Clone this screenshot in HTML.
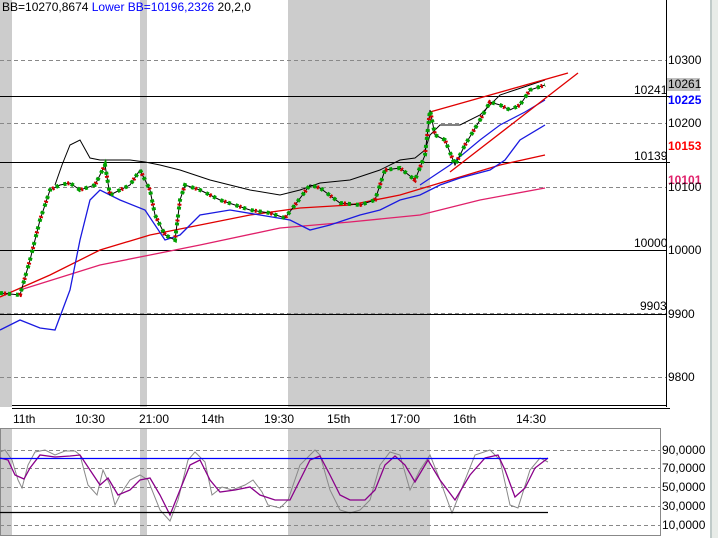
<!DOCTYPE html><html><head><style>
body{margin:0;background:#fff;width:718px;height:538px;overflow:hidden;font-family:"Liberation Sans",sans-serif;}
svg{position:absolute;left:0;top:0}
text{font-family:"Liberation Sans",sans-serif;font-size:12px}
</style></head><body>
<svg width="718" height="538" viewBox="0 0 718 538">
<rect width="718" height="538" fill="#fff"/>
<rect x="0" y="0" width="12" height="407" fill="#cccccc"/>
<rect x="140" y="0" width="7" height="407" fill="#cccccc"/>
<rect x="288" y="0" width="142" height="407" fill="#cccccc"/>
<rect x="0" y="429" width="12" height="106" fill="#cccccc"/>
<rect x="140" y="429" width="7" height="106" fill="#cccccc"/>
<rect x="288" y="429" width="142" height="106" fill="#cccccc"/>
<rect x="710" y="0" width="8" height="538" fill="#e8ece8"/>
<line x1="711" y1="0" x2="711" y2="538" stroke="#9aa" />
<g stroke="#888" stroke-dasharray="4,3" stroke-width="1">
<line x1="0" y1="60.5" x2="666" y2="60.5"/><line x1="0" y1="123.5" x2="666" y2="123.5"/>
<line x1="0" y1="187.5" x2="666" y2="187.5"/><line x1="0" y1="250.5" x2="666" y2="250.5"/>
<line x1="0" y1="313.5" x2="666" y2="313.5"/><line x1="0" y1="377.5" x2="666" y2="377.5"/>
<line x1="0" y1="450.5" x2="660" y2="450.5"/><line x1="0" y1="468.5" x2="660" y2="468.5"/>
<line x1="0" y1="487.5" x2="660" y2="487.5"/><line x1="0" y1="506.5" x2="660" y2="506.5"/>
<line x1="0" y1="525.5" x2="660" y2="525.5"/>
</g>
<g stroke="#000" stroke-width="1">
<line x1="0" y1="96.5" x2="670" y2="96.5"/><line x1="0" y1="162.5" x2="670" y2="162.5"/>
<line x1="0" y1="250.5" x2="666" y2="250.5"/><line x1="0" y1="314.5" x2="666" y2="314.5"/>
<line x1="666.5" y1="0" x2="666.5" y2="407"/>
<line x1="12" y1="405.5" x2="666" y2="405.5"/><line x1="12" y1="408.5" x2="670" y2="408.5"/>
</g>
<rect x="0.5" y="428.5" width="660" height="107" fill="none" stroke="#888"/>
<polyline fill="none" stroke="#e0206a" stroke-width="1.3" points="20,290 100,265 150,255 200,245 280,228 350,222 420,215 480,200 545,188"/>
<polyline fill="none" stroke="#e00000" stroke-width="1.3" points="0,297 50,275 100,250 150,235 200,225 250,215 300,208 350,205 400,195 450,180 500,165 545,155"/>
<polyline fill="none" stroke="#1a1ae0" stroke-width="1.3" points="0,330 20,320 40,328 55,330 70,290 80,240 90,200 100,190 120,200 145,210 165,240 180,235 200,215 230,210 260,215 290,220 310,230 330,225 360,215 380,210 400,200 420,195 440,185 460,178 490,170 505,160 520,140 545,125"/>
<polyline fill="none" stroke="#000" stroke-width="1" points="55,185 62,165 70,145 80,140 90,158 100,160 110,160 130,160 145,162 160,165 180,170 210,180 250,190 280,195 300,190 320,183 350,180 380,170 400,160 415,158 425,150 430,135 440,125 460,125 480,115 500,95 530,85 545,80"/>
<polyline fill="none" stroke="#1a1ae0" stroke-width="1.2" points="420,185 450,165 480,140 500,125 525,112 545,100"/>
<line x1="430" y1="112" x2="568" y2="73" stroke="#e00000" stroke-width="1.3"/>
<line x1="450" y1="172" x2="578" y2="73" stroke="#e00000" stroke-width="1.3"/>
<polyline fill="none" stroke="#000" stroke-width="1" points="0,293 20,295 30,260 40,220 50,190 60,185 70,183 80,190 95,185 105,165 110,195 120,190 130,185 140,170 150,190 155,215 165,235 175,240 180,200 185,185 200,190 210,195 220,200 235,205 250,210 270,213 285,218 295,205 310,185 320,188 340,203 360,205 375,200 385,170 400,168 415,180 425,155 430,110 435,135 445,140 455,165 465,145 480,120 490,102 500,105 510,110 520,105 530,90 545,85"/>
<polyline fill="none" stroke="#00a000" stroke-width="4" stroke-dasharray="3,5" points="0,293 20,295 30,260 40,220 50,190 60,185 70,183 80,190 95,185 105,165 110,195 120,190 130,185 140,170 150,190 155,215 165,235 175,240 180,200 185,185 200,190 210,195 220,200 235,205 250,210 270,213 285,218 295,205 310,185 320,188 340,203 360,205 375,200 385,170 400,168 415,180 425,155 430,110 435,135 445,140 455,165 465,145 480,120 490,102 500,105 510,110 520,105 530,90 545,85"/>
<polyline fill="none" stroke="#d00000" stroke-width="4" stroke-dasharray="2,14" stroke-dashoffset="-4" points="0,293 20,295 30,260 40,220 50,190 60,185 70,183 80,190 95,185 105,165 110,195 120,190 130,185 140,170 150,190 155,215 165,235 175,240 180,200 185,185 200,190 210,195 220,200 235,205 250,210 270,213 285,218 295,205 310,185 320,188 340,203 360,205 375,200 385,170 400,168 415,180 425,155 430,110 435,135 445,140 455,165 465,145 480,120 490,102 500,105 510,110 520,105 530,90 545,85"/>
<polyline fill="none" stroke="#888" stroke-width="1" points="0,452 5,450 12,460 18,480 22,488 28,465 35,452 45,450 55,455 65,451 75,451 80,455 88,485 97,495 103,470 110,485 115,505 120,495 130,480 140,475 148,480 160,510 170,521 178,500 188,460 195,452 205,462 212,495 222,487 232,490 245,485 253,480 262,492 268,505 280,508 288,500 300,465 315,450 320,455 330,490 340,510 350,513 360,510 370,500 380,465 390,452 400,455 410,490 420,470 430,455 440,480 452,513 465,480 475,455 490,450 500,460 510,505 518,508 530,470 540,458 548,462"/>
<polyline fill="none" stroke="#8a008a" stroke-width="1.3" points="0,458 8,460 15,475 24,479 30,468 40,455 55,457 70,456 80,455 90,470 100,485 108,478 118,495 130,490 140,480 150,478 160,495 170,515 180,490 190,465 200,460 210,480 220,492 235,490 250,487 260,495 275,500 290,500 300,480 310,460 320,456 330,475 340,495 350,500 365,500 375,490 385,465 395,456 405,465 415,482 428,460 440,480 455,500 470,475 485,458 498,455 505,470 515,497 525,488 535,468 548,458"/>
<line x1="0" y1="458.5" x2="548" y2="458.5" stroke="#0000ff" stroke-width="1.3"/>
<line x1="0" y1="512.5" x2="548" y2="512.5" stroke="#000" stroke-width="1.2"/>
<text x="2" y="11" fill="#000" font-size="11">BB=10270,8674 <tspan fill="#0000ff">Lower BB=10196,2326</tspan>  20,2,0</text>
<g font-size="11">
<text x="668" y="64">10300</text>
<rect x="667" y="78" width="33" height="13" fill="#c0c0c0"/>
<text x="668" y="88">10261</text>
<text x="668" y="104" fill="#0000ff" font-weight="bold" font-size="12">10225</text>
<text x="668" y="127">10200</text>
<text x="668" y="150" fill="#ff0000" font-weight="bold" font-size="12">10153</text>
<text x="668" y="184" fill="#e0206a" font-weight="bold" font-size="12">10101</text>
<text x="668" y="191">10100</text>
<text x="668" y="254">10000</text>
<text x="668" y="318">9900</text>
<text x="668" y="381">9800</text>
</g>
<g font-size="13">
<text x="634" y="94">10241</text>
<text x="634" y="160">10139</text>
<text x="634" y="247">10000</text>
<text x="640" y="310">9903</text>
</g>
<g font-size="12">
<text x="13" y="423">11th</text><text x="75" y="423">10:30</text><text x="139" y="423">21:00</text>
<text x="201" y="423">14th</text><text x="264" y="423">19:30</text><text x="327" y="423">15th</text>
<text x="390" y="423">17:00</text><text x="453" y="423">16th</text><text x="516" y="423">14:30</text>
</g>
<g font-size="11">
<text x="662" y="454">90,0000</text><text x="662" y="472">70,0000</text><text x="662" y="491">50,0000</text>
<text x="662" y="510">30,0000</text><text x="662" y="529">10,0000</text>
</g>
</svg>
</body></html>
